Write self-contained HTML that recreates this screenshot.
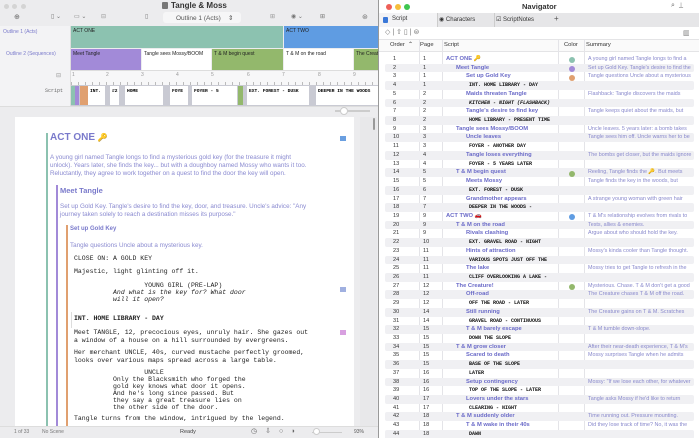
<!DOCTYPE html>
<html><head><meta charset="utf-8"><style>
*{margin:0;padding:0;box-sizing:border-box}
body{width:699px;height:438px;overflow:hidden;background:#d8d8da;font-family:"Liberation Sans",sans-serif;position:relative}
.a{position:absolute}
.lw{left:0;top:0;width:378px;height:438px;background:#ececee;overflow:hidden}
.lab{font-size:5px;color:#7a7acb}
.seg{position:absolute;font-size:5px;color:#222;padding:2px 2px;overflow:hidden;white-space:nowrap}
.mono{font-family:"Liberation Mono",monospace}
.sc{position:absolute;top:86px;height:19px;background:#fff;font-family:"Liberation Mono",monospace;font-weight:bold;font-size:4.6px;padding:3px 2px;white-space:nowrap;overflow:hidden}
.sp{font-family:"Liberation Mono",monospace;font-size:6.5px;color:#222;position:absolute;white-space:pre;line-height:7px}
.desc{position:absolute;font-size:6.3px;color:#8a8ad0;line-height:7.8px}
.nw{left:378px;top:0;width:321px;height:438px;background:#fff;border-left:1px solid #999;overflow:hidden}
.row{position:relative;height:8.72px;font-size:5.6px;line-height:8.72px;white-space:nowrap}
.row.s::before{content:"";position:absolute;left:6px;right:6px;top:0;bottom:0;background:#f0f0f3;border-radius:2px}
.row span{position:absolute;top:0}
.o{left:14px;color:#333}.p{left:44px;color:#333}
.t{color:#6a6ac8;font-weight:bold;font-size:5.8px}
.l0{left:67px}.l1{left:77px}.l2{left:87px}
.h{left:90px;font-family:"Liberation Mono",monospace;font-weight:bold;color:#111;font-size:5px}
.sm{left:209px;color:#8888cc;font-size:5.4px;width:108px;overflow:hidden}
.dot{left:190px;top:2.2px!important;width:6px;height:6px;border-radius:50%}
.vl{position:absolute;top:40px;bottom:0;width:1px;background:#e4e4e8}
</style></head><body>
<div class="a lw">
 <div class="a" style="left:4px;top:4px;width:5px;height:5px;border-radius:50%;background:#d4d4d4"></div>
 <div class="a" style="left:12px;top:4px;width:5px;height:5px;border-radius:50%;background:#d4d4d4"></div>
 <div class="a" style="left:21px;top:4px;width:5px;height:5px;border-radius:50%;background:#d4d4d4"></div>
 <div class="a" style="left:162px;top:2px;width:6px;height:7px;background:#777;border-radius:1px"></div>
 <div class="a" style="left:171px;top:1px;font-size:8px;font-weight:bold;color:#333">Tangle &amp; Moss</div>
 <div class="a" style="top:13px;left:14px;font-size:7px;color:#666">⊕</div>
 <div class="a" style="top:13px;left:51px;font-size:6px;color:#777">▯ ⌄</div>
 <div class="a" style="top:13px;left:74px;font-size:6px;color:#777">▭ ⌄</div>
 <div class="a" style="top:13px;left:101px;font-size:6px;color:#999">⊟</div>
 <div class="a" style="top:13px;left:145px;font-size:6px;color:#777">▯</div>
 <div class="a" style="top:12px;left:163px;width:78px;height:11px;background:#f6f6f7;border-radius:3px"></div>
 <div class="a" style="top:14px;left:176px;font-size:6.5px;color:#555">Outline 1 (Acts)&nbsp;&nbsp;&nbsp;&nbsp;⇕</div>
 <div class="a" style="top:13px;left:270px;font-size:6px;color:#999">⊞</div>
 <div class="a" style="top:13px;left:291px;font-size:6px;color:#777">◉ ⌄</div>
 <div class="a" style="top:13px;left:320px;font-size:6px;color:#777">⊞</div>
 <div class="a" style="top:13px;left:362px;font-size:7px;color:#777">⊛</div>
 <div class="a" style="left:0;top:26px;width:71px;height:80px;background:#f3f3f5;border-right:1px solid #ddd"></div>
 <div class="a lab" style="left:3px;top:29px">Outline 1 (Acts)</div>
 <div class="a lab" style="left:6px;top:51px">Outline 2 (Sequences)</div>
 <div class="seg" style="left:71px;top:26px;width:212px;height:22px;background:#8cc2b0">ACT ONE</div>
 <div class="seg" style="left:284px;top:26px;width:100px;height:22px;background:#5f9ce2">ACT TWO</div>
 <div class="seg" style="left:71px;top:49px;width:70px;height:21px;background:#a28ad8">Meet Tangle</div>
 <div class="seg" style="left:142px;top:49px;width:69px;height:21px;background:#fff">Tangle sees Mossy/BOOM</div>
 <div class="seg" style="left:212px;top:49px;width:71px;height:21px;background:#93b86c">T &amp; M begin quest</div>
 <div class="seg" style="left:284px;top:49px;width:69px;height:21px;background:#fff">T &amp; M on the road</div>
 <div class="seg" style="left:354px;top:49px;width:30px;height:21px;background:#93b86c">The Creature!</div>
 <div class="a" style="left:71px;top:70px;width:310px;height:15px;background:#f7f7f8;border-top:1px solid #ddd"></div>
 <div class="a" style="left:56px;top:72px;font-size:6px;color:#999">⊟</div>
 <div class="a" style="left:72px;top:72px;font-size:5px;color:#999;width:300px;height:12px">
  <span class="a" style="left:0">1</span><span class="a" style="left:34px">2</span><span class="a" style="left:69px">3</span><span class="a" style="left:104px">4</span><span class="a" style="left:139px">5</span><span class="a" style="left:175px">6</span><span class="a" style="left:210px">7</span><span class="a" style="left:246px">8</span><span class="a" style="left:281px">9</span>
 </div>
 <div class="a" style="left:71px;top:82px;width:310px;height:3px;background:repeating-linear-gradient(90deg,#bbb 0 1px,transparent 1px 7px)"></div>
 <div class="a mono" style="left:45px;top:88px;font-size:5px;color:#666">Script</div>
 <div class="a" style="left:71px;top:85px;width:310px;height:21px;background:#c9cad3"></div>
 <div class="a" style="left:71px;top:86px;width:4px;height:19px;background:#8cc2b0"></div>
 <div class="a" style="left:75px;top:86px;width:4px;height:19px;background:#a28ad8"></div>
 <div class="a" style="left:80px;top:86px;width:8px;height:19px;background:#e0a070"></div>
 <div class="sc" style="left:88px;width:17px">INT.</div>
 <div class="sc" style="left:110px;width:9px">#2</div>
 <div class="sc" style="left:125px;width:38px">HOME</div>
 <div class="sc" style="left:170px;width:18px">FOYE</div>
 <div class="sc" style="left:192px;width:45px">FOYER - 5</div>
 <div class="a" style="left:238px;top:86px;width:5px;height:19px;background:#93b86c"></div>
 <div class="sc" style="left:247px;width:62px">EXT. FOREST - DUSK</div>
 <div class="sc" style="left:316px;width:62px">DEEPER IN THE WOODS</div>
 <div class="a" style="left:0;top:106px;width:378px;height:10px;background:#ececee;border-top:1px solid #ddd"></div>
 <div class="a" style="left:335px;top:110px;width:35px;height:2px;background:#ccc"></div>
 <div class="a" style="left:340px;top:107px;width:8px;height:8px;border-radius:50%;background:#fff;border:1px solid #ccc"></div>
 <div class="a" style="left:15px;top:117px;width:339px;height:310px;background:#fff"></div>
 <div class="a" style="left:360px;top:117px;width:17px;height:310px;background:#e8e8ea"></div>
 <div class="a" style="left:373px;top:118px;width:2px;height:12px;background:#999;border-radius:1px"></div>
 <div class="a" style="left:46px;top:133px;width:2px;height:294px;background:#8cc2b0"></div>
 <div class="a" style="left:56px;top:185px;width:2px;height:242px;background:#a28ad8"></div>
 <div class="a" style="left:66px;top:225px;width:2px;height:202px;background:#e0a070"></div>
 <div class="a" style="left:50px;top:132px;font-size:10px;font-weight:bold;color:#7a7acb">ACT ONE <span style="color:#d4a020;font-size:8px">🔑</span></div>
 <div class="desc" style="left:50px;top:154px;width:258px">A young girl named Tangle longs to find a mysterious gold key (for the treasure it might unlock). Years later, she finds the key... but with a doughboy named Mossy who wants it too. Reluctantly, they agree to work together on a quest to find the door the key will open.</div>
 <div class="a" style="left:60px;top:186px;font-size:7.5px;font-weight:bold;color:#7a7acb">Meet Tangle</div>
 <div class="desc" style="left:60px;top:203px;width:250px">Set up Gold Key. Tangle's desire to find the key, door, and treasure. Uncle's advice: "Any journey taken solely to reach a destination misses its purpose."</div>
 <div class="a" style="left:70px;top:226px;font-size:6px;font-weight:bold;color:#7a7acb">Set up Gold Key</div>
 <div class="desc" style="left:70px;top:242px;width:260px">Tangle questions Uncle about a mysterious key.</div>
 <div class="sp" style="left:74px;top:255px">CLOSE ON: A GOLD KEY</div>
 <div class="sp" style="left:74px;top:268px">Majestic, light glinting off it.</div>
 <div class="sp" style="left:74px;top:282px">                  YOUNG GIRL (PRE-LAP)
          <i>And what is the key for? What door
          will it open?</i></div>
 <div class="a" style="left:71px;top:312px;width:1px;height:16px;background:#ddd"></div>
 <div class="sp" style="left:74px;top:315px;font-weight:bold">INT. HOME LIBRARY - DAY</div>
 <div class="sp" style="left:74px;top:329px;line-height:7.5px">Meet TANGLE, 12, precocious eyes, unruly hair. She gazes out
a window of a house on a hill surrounded by evergreens.</div>
 <div class="sp" style="left:74px;top:349px;line-height:7.5px">Her merchant UNCLE, 40s, curved mustache perfectly groomed,
looks over various maps spread across a large table.</div>
 <div class="sp" style="left:74px;top:369px">                  UNCLE
          Only the Blacksmith who forged the
          gold key knows what door it opens.
          And he's long since passed. But
          they say a great treasure lies on
          the other side of the door.</div>
 <div class="sp" style="left:74px;top:415px">Tangle turns from the window, intrigued by the legend.</div>
 <div class="a" style="left:340px;top:136px;width:6px;height:5px;background:#6a9fe0"></div>
 <div class="a" style="left:340px;top:287px;width:6px;height:5px;background:#a0b0e0"></div>
 <div class="a" style="left:340px;top:330px;width:6px;height:5px;background:#d8a0e0"></div>
 <div class="a" style="left:0;top:426px;width:378px;height:12px;background:#ececee;border-top:1px solid #ddd"></div>
 <div class="a" style="left:14px;top:429px;font-size:5px;color:#777">1 of 33</div>
 <div class="a" style="left:42px;top:429px;font-size:5px;color:#777">No Scene</div>
 <div class="a" style="left:180px;top:429px;font-size:5.5px;color:#444">Ready</div>
 <div class="a" style="left:251px;top:427px;font-size:7px;color:#666;letter-spacing:8px">◷⇩○◗</div>
 <div class="a" style="left:312px;top:432px;width:30px;height:1px;background:#ccc"></div>
 <div class="a" style="left:313px;top:428px;width:7px;height:7px;border-radius:50%;background:#fff;border:1px solid #ccc"></div>
 <div class="a" style="left:354px;top:429px;font-size:5px;color:#555">93%</div>
</div>

<div class="a nw">
 <div class="a" style="left:7px;top:4px;width:6px;height:6px;border-radius:50%;background:#ee5f58"></div>
 <div class="a" style="left:16px;top:4px;width:6px;height:6px;border-radius:50%;background:#f6be3b"></div>
 <div class="a" style="left:25px;top:4px;width:6px;height:6px;border-radius:50%;background:#3fc650"></div>
 <div class="a" style="left:143px;top:2px;font-size:7.5px;font-weight:bold;color:#333">Navigator</div>
 <div class="a" style="left:292px;top:2px;font-size:7px;color:#666">⌕&nbsp;&nbsp;⊥</div>
 <div class="a" style="left:0;top:13px;width:321px;height:14px;background:#e6e6e8"></div>
 <div class="a" style="left:0;top:13px;width:58px;height:14px;background:#f3f3f5"></div>
 <div class="a" style="left:4px;top:17px;width:5px;height:6px;background:#3a78d8;border-radius:1px"></div>
 <div class="a" style="left:13px;top:16px;font-size:6px;color:#333">Script</div>
 <div class="a" style="left:58px;top:13px;width:1px;height:14px;background:#ccc"></div>
 <div class="a" style="left:60px;top:16px;font-size:6px;color:#333">◉ Characters</div>
 <div class="a" style="left:115px;top:13px;width:1px;height:14px;background:#ccc"></div>
 <div class="a" style="left:117px;top:16px;font-size:6px;color:#333">☑ ScriptNotes</div>
 <div class="a" style="left:175px;top:14px;font-size:8px;color:#555">+</div>
 <div class="a" style="left:6px;top:28px;font-size:7px;color:#777">◇ | ⇧ ▯ | ⊜</div>
 <div class="a" style="left:304px;top:29px;font-size:7px;color:#777">▥</div>
 <div class="a" style="left:0;top:39px;width:321px;height:13px;background:#fafafa;border-top:1px solid #e4e4e6;border-bottom:1px solid #e4e4e6"></div>
 <div class="a" style="left:11px;top:42px;font-size:5.8px;color:#333">Order&nbsp;&nbsp;⌃</div>
 <div class="a" style="left:41px;top:42px;font-size:5.8px;color:#333">Page</div>
 <div class="a" style="left:65px;top:42px;font-size:5.8px;color:#333">Script</div>
 <div class="a" style="left:185px;top:42px;font-size:5.8px;color:#333">Color</div>
 <div class="a" style="left:207px;top:42px;font-size:5.8px;color:#333">Summary</div>
 <div class="vl" style="left:40px"></div><div class="vl" style="left:63px"></div><div class="vl" style="left:179px"></div><div class="vl" style="left:205px"></div>
 <div class="a" style="left:0;top:55px;width:321px">
<div class="row"><span class="o">1</span><span class="p">1</span><span class="t l0">ACT ONE <span style="position:static;color:#d4a020">🔑</span></span><span class="dot" style="background:#8cc2b0"></span><span class="sm">A young girl named Tangle longs to find a</span></div>
<div class="row s"><span class="o">2</span><span class="p">1</span><span class="t l1">Meet Tangle</span><span class="dot" style="background:#a28ad8"></span><span class="sm">Set up Gold Key. Tangle's desire to find the</span></div>
<div class="row"><span class="o">3</span><span class="p">1</span><span class="t l2">Set up Gold Key</span><span class="dot" style="background:#e0a070"></span><span class="sm">Tangle questions Uncle about a mysterious</span></div>
<div class="row s"><span class="o">4</span><span class="p">1</span><span class="h">INT. HOME LIBRARY - DAY</span></div>
<div class="row"><span class="o">5</span><span class="p">2</span><span class="t l2">Maids threaten Tangle</span><span class="sm">Flashback: Tangle discovers the maids</span></div>
<div class="row s"><span class="o">6</span><span class="p">2</span><span class="h"><i>KITCHEN - NIGHT (FLASHBACK)</i></span></div>
<div class="row"><span class="o">7</span><span class="p">2</span><span class="t l2">Tangle's desire to find key</span><span class="sm">Tangle keeps quiet about the maids, but</span></div>
<div class="row s"><span class="o">8</span><span class="p">2</span><span class="h">HOME LIBRARY - PRESENT TIME</span></div>
<div class="row"><span class="o">9</span><span class="p">3</span><span class="t l1">Tangle sees Mossy/BOOM</span><span class="sm">Uncle leaves. 5 years later: a bomb takes</span></div>
<div class="row s"><span class="o">10</span><span class="p">3</span><span class="t l2">Uncle leaves</span><span class="sm">Tangle sees him off. Uncle warns her to be</span></div>
<div class="row"><span class="o">11</span><span class="p">3</span><span class="h">FOYER - ANOTHER DAY</span></div>
<div class="row s"><span class="o">12</span><span class="p">4</span><span class="t l2">Tangle loses everything</span><span class="sm">The bombs get closer, but the maids ignore</span></div>
<div class="row"><span class="o">13</span><span class="p">4</span><span class="h">FOYER - 5 YEARS LATER</span></div>
<div class="row s"><span class="o">14</span><span class="p">5</span><span class="t l1">T &amp; M begin quest</span><span class="dot" style="background:#93b86c"></span><span class="sm">Reeling, Tangle finds the 🔑. But meets</span></div>
<div class="row"><span class="o">15</span><span class="p">5</span><span class="t l2">Meets Mossy</span><span class="sm">Tangle finds the key in the woods, but</span></div>
<div class="row s"><span class="o">16</span><span class="p">6</span><span class="h">EXT. FOREST - DUSK</span></div>
<div class="row"><span class="o">17</span><span class="p">7</span><span class="t l2">Grandmother appears</span><span class="sm">A strange young woman with green hair</span></div>
<div class="row s"><span class="o">18</span><span class="p">7</span><span class="h">DEEPER IN THE WOODS -</span></div>
<div class="row"><span class="o">19</span><span class="p">9</span><span class="t l0">ACT TWO 🚗</span><span class="dot" style="background:#5f9ce2"></span><span class="sm">T &amp; M's relationship evolves from rivals to</span></div>
<div class="row s"><span class="o">20</span><span class="p">9</span><span class="t l1">T &amp; M on the road</span><span class="sm">Tests, allies &amp; enemies.</span></div>
<div class="row"><span class="o">21</span><span class="p">9</span><span class="t l2">Rivals clashing</span><span class="sm">Argue about who should hold the key.</span></div>
<div class="row s"><span class="o">22</span><span class="p">10</span><span class="h">EXT. GRAVEL ROAD - NIGHT</span></div>
<div class="row"><span class="o">23</span><span class="p">11</span><span class="t l2">Hints of attraction</span><span class="sm">Mossy's kinda cooler than Tangle thought.</span></div>
<div class="row s"><span class="o">24</span><span class="p">11</span><span class="h">VARIOUS SPOTS JUST OFF THE</span></div>
<div class="row"><span class="o">25</span><span class="p">11</span><span class="t l2">The lake</span><span class="sm">Mossy tries to get Tangle to refresh in the</span></div>
<div class="row s"><span class="o">26</span><span class="p">11</span><span class="h">CLIFF OVERLOOKING A LAKE -</span></div>
<div class="row"><span class="o">27</span><span class="p">12</span><span class="t l1">The Creature!</span><span class="dot" style="background:#93b86c"></span><span class="sm">Mysterious. Chase. T &amp; M don't get a good</span></div>
<div class="row s"><span class="o">28</span><span class="p">12</span><span class="t l2">Off-road</span><span class="sm">The Creature chases T &amp; M off the road.</span></div>
<div class="row"><span class="o">29</span><span class="p">12</span><span class="h">OFF THE ROAD - LATER</span></div>
<div class="row s"><span class="o">30</span><span class="p">14</span><span class="t l2">Still running</span><span class="sm">The Creature gains on T &amp; M. Scratches</span></div>
<div class="row"><span class="o">31</span><span class="p">14</span><span class="h">GRAVEL ROAD - CONTINUOUS</span></div>
<div class="row s"><span class="o">32</span><span class="p">15</span><span class="t l2">T &amp; M barely escape</span><span class="sm">T &amp; M tumble down-slope.</span></div>
<div class="row"><span class="o">33</span><span class="p">15</span><span class="h">DOWN THE SLOPE</span></div>
<div class="row s"><span class="o">34</span><span class="p">15</span><span class="t l1">T &amp; M grow closer</span><span class="sm">After their near-death experience, T &amp; M's</span></div>
<div class="row"><span class="o">35</span><span class="p">15</span><span class="t l2">Scared to death</span><span class="sm">Mossy surprises Tangle when he admits</span></div>
<div class="row s"><span class="o">36</span><span class="p">15</span><span class="h">BASE OF THE SLOPE</span></div>
<div class="row"><span class="o">37</span><span class="p">16</span><span class="h">LATER</span></div>
<div class="row s"><span class="o">38</span><span class="p">16</span><span class="t l2">Setup contingency</span><span class="sm">Mossy: "If we lose each other, for whatever</span></div>
<div class="row"><span class="o">39</span><span class="p">16</span><span class="h">TOP OF THE SLOPE - LATER</span></div>
<div class="row s"><span class="o">40</span><span class="p">17</span><span class="t l2">Lovers under the stars</span><span class="sm">Tangle asks Mossy if he'd like to return</span></div>
<div class="row"><span class="o">41</span><span class="p">17</span><span class="h">CLEARING - NIGHT</span></div>
<div class="row s"><span class="o">42</span><span class="p">18</span><span class="t l1">T &amp; M suddenly older</span><span class="sm">Time running out. Pressure mounting.</span></div>
<div class="row"><span class="o">43</span><span class="p">18</span><span class="t l2">T &amp; M wake in their 40s</span><span class="sm">Did they lose track of time? No, it was the</span></div>
<div class="row s"><span class="o">44</span><span class="p">18</span><span class="h">DAWN</span></div>
 </div>
</div>
</body></html>
